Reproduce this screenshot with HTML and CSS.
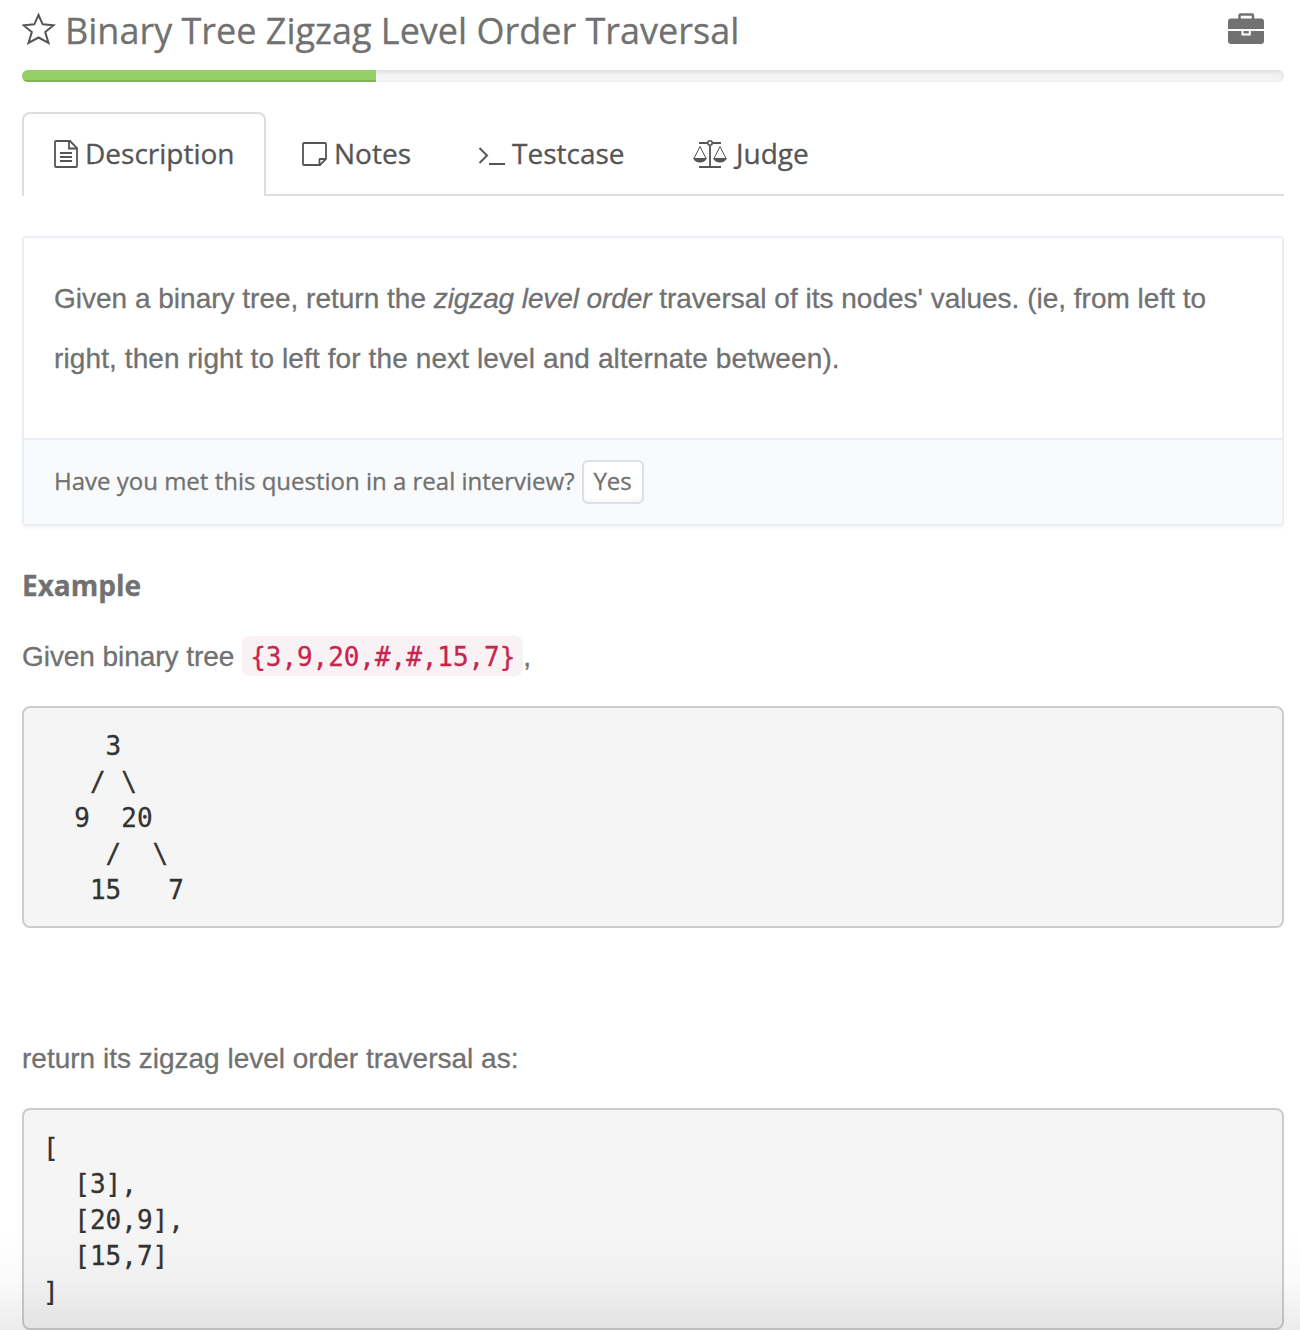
FILE: index.html
```html
<!DOCTYPE html>
<html lang="en">
<head>
<meta charset="utf-8">
<title>Binary Tree Zigzag Level Order Traversal</title>
<link rel="stylesheet" href="styles.css">
</head>
<body>
<main class="page">
  <header class="header">
    <svg class="star" width="34" height="34" viewBox="0 0 34 34" fill="none" stroke="#555" stroke-width="2"><path d="M16.500 3 L20.700 12.300 L31.500 13.300 L23.200 20 L26.500 31 L16.500 25.500 L6.500 31 L9.800 20 L1.500 13.300 L12.300 12.300 Z"/></svg>
    <h1 class="title">Binary Tree Zigzag Level Order Traversal</h1>
    <svg class="briefcase" width="36" height="32" viewBox="0 0 36 32"><path d="M11.500 6V2.500Q11.500 1.500 12.500 1.500H24Q25 1.500 25 2.500V6" fill="none" stroke="#717171" stroke-width="2.500"/><path d="M3 5.500H33Q36 5.500 36 8.500V16H0V8.500Q0 5.500 3 5.500ZM0 18H13.500V22.500H22.800V18H36V28Q36 31 33 31H3Q0 31 0 28Z" fill="#717171"/><path d="M15.500 18H20.800V20.500H15.500Z" fill="#717171"/></svg>
  </header>
  <div class="progress"><div class="bar"></div></div>
  <nav class="tabs">
    <a class="tab active">
      <svg width="24" height="28" viewBox="0 0 24 28" fill="none" stroke="#555" stroke-width="1.800"><path d="M2 1H16L23 8V26Q23 27 22 27H2Q1 27 1 26V2Q1 1 2 1Z"/><path d="M15 1V8.500H23M6 13H18M6 17H18M6 21H18"/></svg>
      <span>Description</span>
    </a>
    <a class="tab notes">
      <svg width="25" height="24" viewBox="0 0 25 24" fill="none" stroke="#555" stroke-width="1.800"><path d="M2 1H23Q24 1 24 2V17L18 23H2Q1 23 1 22V2Q1 1 2 1Z"/><path d="M17.500 23V17.500Q17.500 17 18 17H24"/></svg>
      <span>Notes</span>
    </a>
    <a class="tab testcase">
      <svg width="27" height="18" viewBox="0 0 27 18" fill="none" stroke="#555" stroke-width="2"><path d="M1.500 1L9 8.500L1.500 16M11 17H27"/></svg>
      <span>Testcase</span>
    </a>
    <a class="tab judge">
      <svg width="34" height="28" viewBox="0 0 34 28" fill="none" stroke="#555"><path d="M6 3H14.500M19.500 3H28M17 6V27M6 27H28" stroke-width="1.800"/><circle cx="17" cy="3" r="2.200" stroke-width="1.600"/><path d="M1 18.500L7 6.500L13 18.500M21 18.500L27 6.500L33 18.500" stroke-width="1"/><path d="M0 18H14Q12 22.500 7 22.500T0 18ZM20 18H34Q32 22.500 27 22.500T20 18Z" fill="#555" stroke="none"/></svg>
      <span>Judge</span>
    </a>
  </nav>
  <section class="panel">
    <div class="question">
      <span class="line">Given a binary tree, return the <em>zigzag level order</em> traversal of its nodes' values. (ie, from left to</span>
      <span class="line second">right, then right to left for the next level and alternate between).</span>
    </div>
    <footer class="met">
      <span class="prompt">Have you met this question in a real interview?</span>
      <button class="yes">Yes</button>
    </footer>
  </section>
  <h2 class="example">Example</h2>
  <p class="text given"><span>Given binary tree</span><code>{3,9,20,#,#,15,7}</code><span>,</span></p>
  <pre class="code">    3
   / \
  9  20
    /  \
   15   7</pre>
  <p class="text result">return its zigzag level order traversal as:</p>
  <pre class="code">[
  [3],
  [20,9],
  [15,7]
]</pre>
</main>
<div class="fade"></div>
</body>
</html>
```

FILE: styles.css
```css
* { box-sizing: border-box; }
body {
  margin: 0;
  height: 1330px;
  overflow: hidden;
  position: relative;
  background: #fff;
  color: #717171;
  font-family: "Open Sans", sans-serif;
  -webkit-text-stroke: .3px;
}
.page { padding: 0 16px 0 22px; }
.header { display: flex; height: 70px; align-items: flex-start; }
.star { margin-top: 12px; }
.title {
  flex: 1;
  margin: 6px 0 0 9px;
  font-size: 36px;
  font-weight: 400;
  line-height: 50px;
  white-space: nowrap;
}
.briefcase { margin: 13px 20px 0 0; }
.progress {
  height: 12px;
  border-radius: 6px;
  background: #f4f4f4;
  box-shadow: inset 0 2px 4px rgba(0,0,0,.1);
  overflow: hidden;
}
.bar { width: 354px; height: 12px; background: #93cf65; box-shadow: inset 0 -2px 0 #7eb356; }
.tabs {
  display: flex;
  height: 84px;
  margin-top: 30px;
  color: #555;
  font-size: 28px;
  line-height: 40px;
  border-bottom: 2px solid #ddd;
}
.tab { display: flex; align-items: center; height: 84px; white-space: nowrap; }
.tab span { padding-bottom: 2px; }
.active {
  width: 244px;
  padding: 0 0 2px 30px;
  gap: 7px;
  background: #fff;
  border: 2px solid #ddd;
  border-bottom: 0;
  border-radius: 8px 8px 0 0;
}
.notes { margin-left: 36px; width: 176px; gap: 7px; }
.testcase { width: 215px; gap: 7px; }
.testcase svg { margin-top: 4px; }
.judge { gap: 9px; }
.panel {
  height: 290px;
  margin-top: 40px;
  border: 2px solid #e9eff5;
  border-radius: 4px;
  box-shadow: 0 2px 4px rgba(0,0,0,.04);
}
.question {
  height: 200px;
  padding: 31px 30px 0;
  font: 28px/60px "Liberation Sans", sans-serif;
}
.line { display: block; width: max-content; white-space: nowrap; }
.line em { letter-spacing: -.1px; }
.second { letter-spacing: .11px; }
.met {
  display: flex;
  align-items: center;
  height: 86px;
  padding: 0 30px;
  gap: 7px;
  background: #f9fafc;
  border-top: 2px solid #e9eff5;
  font-size: 24px;
  white-space: nowrap;
}
.prompt { padding-bottom: 3px; }
.yes {
  width: 62px;
  height: 44px;
  padding: 0 0 2px;
  border: 2px solid #dcdfe8;
  border-radius: 6px;
  background: #fff;
  box-shadow: inset 0 -3px 3px rgba(0,0,0,.03);
  color: #717171;
  font: 24px/38px "Open Sans", sans-serif;
}
.example { margin: 39px 0 0; font-size: 28px; font-weight: 700; line-height: 40px; }
.text { display: flex; align-items: center; margin: 0; font: 28px/40px "Liberation Sans", sans-serif; white-space: nowrap; }
.text span { padding-top: 2px; }
.given { height: 40px; margin-top: 31px; letter-spacing: -.06px; }
.given code {
  height: 40px;
  margin-left: 8px;
  padding: 1px 8px 0;
  border-radius: 8px;
  background: #f9f2f4;
  color: #c7254e;
  font: 26px/40px "DejaVu Sans Mono", monospace;
}
.code {
  height: 222px;
  margin: 30px 0 0;
  padding: 20px 19px 18px;
  border: 2px solid #ccc;
  border-radius: 8px;
  background: #f5f5f5;
  color: #333;
  font: 26px/36px "DejaVu Sans Mono", monospace;
}
.result { height: 40px; margin-top: 110px; padding-top: 2px; }
.fade {
  position: absolute;
  left: 0;
  right: 0;
  bottom: 0;
  height: 100px;
  background: linear-gradient(transparent, rgba(0,0,0,.02) 50%, rgba(0,0,0,.075));
}
```
